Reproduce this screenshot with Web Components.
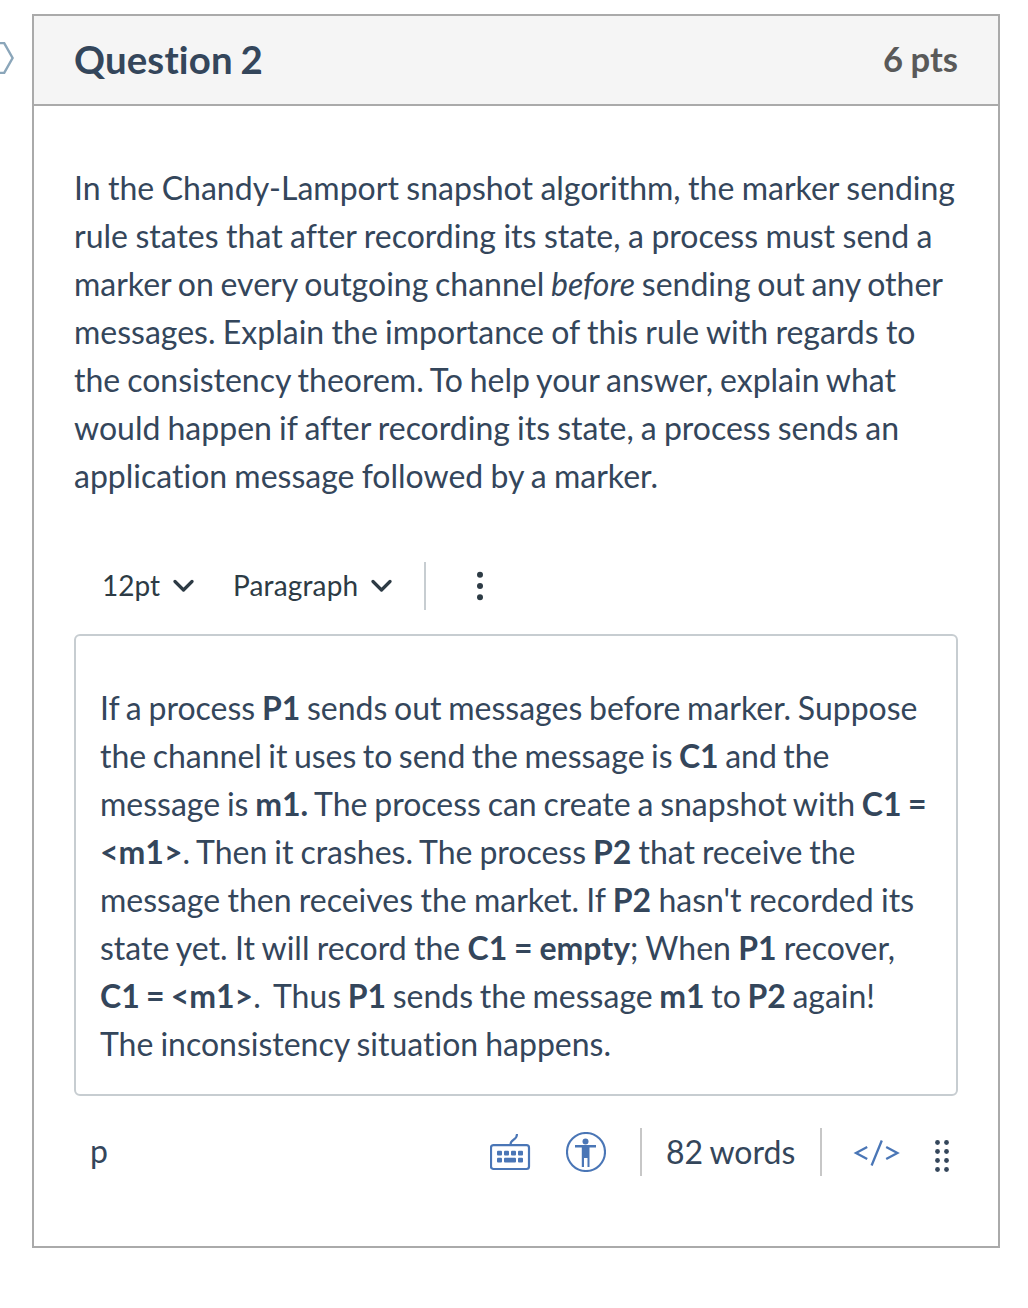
<!DOCTYPE html>
<html lang="en">
<head>
<meta charset="utf-8">
<title>Question 2</title>
<style>
body{margin:0;background:#fff;font-family:Lato,"Liberation Sans",sans-serif;font-size:32px;line-height:48px;color:#34465b;font-variant-ligatures:none}
</style>
</head>
<body>
<quiz-page>
  <flag-marker slot="flag"></flag-marker>
  <question-card>
    <span slot="title">Question 2</span>
    <span slot="points">6 pts</span>
    <rich-text>
      <text-line measure="881">In the Chandy-Lamport snapshot algorithm, the marker sending</text-line>
      <text-line measure="858.5">rule states that after recording its state, a process must send a</text-line>
      <text-line measure="869">marker on every outgoing channel <i>before</i> sending out any other</text-line>
      <text-line measure="841.5">messages. Explain the importance of this rule with regards to</text-line>
      <text-line measure="822">the consistency theorem. To help your answer, explain what</text-line>
      <text-line measure="825">would happen if after recording its state, a process sends an</text-line>
      <text-line measure="584">application message followed by a marker.</text-line>
    </rich-text>
    <editor-toolbar></editor-toolbar>
    <editor-area><rich-text>
      <text-line measure="817.5">If a process <b>P1</b> sends out messages before marker. Suppose</text-line>
      <text-line measure="729.5">the channel it uses to send the message is <b>C1</b> and the</text-line>
      <text-line measure="826.5">message is <b>m1.</b> The process can create a snapshot with <b>C1 =</b></text-line>
      <text-line measure="755.5"><b>&lt;m1&gt;</b>. Then it crashes. The process <b>P2</b> that receive the</text-line>
      <text-line measure="814">message then receives the market. If <b>P2</b> hasn't recorded its</text-line>
      <text-line measure="795">state yet. It will record the <b>C1 = empty</b>; When <b>P1</b> recover,</text-line>
      <text-line measure="775"><b>C1 = &lt;m1&gt;</b>.&nbsp; Thus <b>P1</b> sends the message <b>m1</b> to <b>P2</b> again!</text-line>
      <text-line measure="511">The inconsistency situation happens.</text-line>
    </rich-text></editor-area>
    <editor-status path="p" words="82 words"></editor-status>
  </question-card>
</quiz-page>
<script>
const define = (name, html, setup) => customElements.define(name, class extends HTMLElement {
  constructor() {
    super();
    this.attachShadow({ mode: 'open' }).innerHTML = html;
  }
  connectedCallback() { if (setup) setup(this); }
});

define('quiz-page', `
<style>
:host{display:flex;align-items:flex-start;box-sizing:border-box;width:1028px;height:1308px;padding:14px 28px 0 0;overflow:hidden}
.gutter{width:32px;flex:none;padding-top:28px;box-sizing:border-box}
</style>
<div class="gutter"><slot name="flag"></slot></div><slot></slot>`);

define('flag-marker', `
<style>:host{display:block;height:32px}svg{display:block}</style>
<svg width="15" height="32" viewBox="0 0 15 32" fill="none" stroke="#8ba6ba" stroke-width="2.4"><path d="M-2 1.1H4.2L12.6 16L4.2 30.9H-2"/></svg>`);

define('question-card', `
<style>
:host{display:flex;flex-direction:column;box-sizing:border-box;width:968px;height:1234px;border:2px solid #aaa;background:#fff}
header{display:flex;justify-content:space-between;align-items:center;box-sizing:border-box;height:90px;padding:0 40px 2px;background:#f5f5f5;border-bottom:2px solid #aaa;font-weight:700}
.title{font-size:38.4px;letter-spacing:.15px;word-spacing:-1.8px}
.points{font-size:34.6px;word-spacing:-1px;color:#595959}
main{display:flex;flex-direction:column;padding:59px 40px 0}
</style>
<header><span class="title"><slot name="title"></slot></span><span class="points"><slot name="points"></slot></span></header>
<main><slot></slot></main>`);

define('rich-text', `
<style>:host{display:flex;flex-direction:column;margin:-1px 0 1px}</style><slot></slot>`);

// One typeset line: tight word gaps that open up to fill the given measure.
define('text-line', `
<style>:host{display:block;height:48px;word-spacing:-4px;text-align:justify;text-align-last:justify}</style><slot></slot>`,
host => { host.style.width = host.getAttribute('measure') + 'px'; });

define('tool-select', `
<style>
:host{display:flex;align-items:center;font-size:28px;color:#2d3b45}
span{margin-top:-2px}
svg{display:block;margin-left:auto}
</style>
<span><slot></slot></span><svg width="21" height="14" viewBox="0 0 21 14" fill="none" stroke="#2d3b45" stroke-width="3.2" stroke-linecap="round" stroke-linejoin="round"><path d="M2 2.5L10.5 11L19 2.5"/></svg>`);

define('bar-divider', `
<style>:host{display:block;flex:none;width:2px;height:48px;background:var(--line,#c7cdd1)}</style>`);

define('editor-toolbar', `
<style>
:host{display:flex;align-items:center;height:48px;margin-top:61px;padding-left:28px}
tool-select{flex:none;box-sizing:border-box}
tool-select:nth-of-type(1){width:92px;margin-right:39px}
tool-select:nth-of-type(2){width:159px;margin-right:32px;letter-spacing:.15px}
svg{display:block;margin-left:50px}
</style>
<tool-select>12pt</tool-select><tool-select>Paragraph</tool-select><bar-divider></bar-divider>
<svg width="8" height="30" viewBox="0 0 8 30" fill="#2d3b45"><circle cx="4" cy="3.7" r="3"/><circle cx="4" cy="15" r="3"/><circle cx="4" cy="26.3" r="3"/></svg>`);

define('editor-area', `
<style>:host{display:block;box-sizing:border-box;height:462px;margin-top:24px;padding:49px 24px 0;border:2px solid #c7cdd1;border-radius:6px}</style><slot></slot>`);

define('editor-status', `
<style>
:host{display:flex;align-items:center;height:48px;margin-top:32px;padding-left:16px;--line:#c7c7c7}
svg{display:block;flex:none}
.path{flex:none;width:400px;margin-top:-2px}
.keys{margin-right:35px}
.a11y{margin-right:34px}
.words{flex:none;width:154px;text-indent:24px;margin-right:24px;white-space:nowrap;word-spacing:-1.2px}
.code{margin:1px 34px 0 31px}
.grip{margin-top:7px}
</style>
<span class="path"></span>
<svg class="keys" width="41" height="40" viewBox="0 0 41 40" fill="#4a76b6"><rect x="1" y="13.2" width="38" height="23.8" rx="2.5" fill="none" stroke="#4a76b6" stroke-width="2.2"/><path d="M20.5 12.5C20.5 6.5 27 9 27 2" fill="none" stroke="#4a76b6" stroke-width="2.1"/><rect x="7" y="18.8" width="5" height="4.6" rx="1"/><rect x="14" y="18.8" width="5" height="4.6" rx="1"/><rect x="21" y="18.8" width="5" height="4.6" rx="1"/><rect x="28" y="18.8" width="5" height="4.6" rx="1"/><rect x="7" y="25.8" width="5" height="4.6" rx="1"/><rect x="14" y="25.8" width="12" height="4.6" rx="1"/><rect x="28" y="25.8" width="5" height="4.6" rx="1"/></svg>
<svg class="a11y" width="40" height="40" viewBox="0 0 40 40" fill="#4a76b6"><circle cx="20" cy="20" r="19" fill="none" stroke="#4a76b6" stroke-width="2.1"/><circle cx="19.5" cy="9.5" r="3"/><path d="M9 13.1H30V15.5H23.5V35H21.5V26H18V35H15.8V15.5H9Z"/></svg>
<bar-divider></bar-divider><span class="words"></span><bar-divider></bar-divider>
<svg class="code" width="47" height="28" viewBox="0 0 47 28" fill="none" stroke="#4a76b6" stroke-width="2.3"><path d="M14.2 8L3 14L14.2 20M28.8 1.5L18.6 26.5M33.2 8L44.4 14L33.2 20"/></svg>
<svg class="grip" width="16" height="34" viewBox="0 0 16 34" fill="#34465b"></svg>`,
host => {
  const root = host.shadowRoot;
  root.querySelector('.path').textContent = host.getAttribute('path');
  root.querySelector('.words').textContent = host.getAttribute('words');
  let dots = '';
  for (const y of [3.5, 12.5, 21.5, 30.5])
    for (const x of [3.5, 12.5]) dots += `<circle cx="${x}" cy="${y}" r="2.4"/>`;
  root.querySelector('.grip').innerHTML = dots;
});
</script>
</body>
</html>
